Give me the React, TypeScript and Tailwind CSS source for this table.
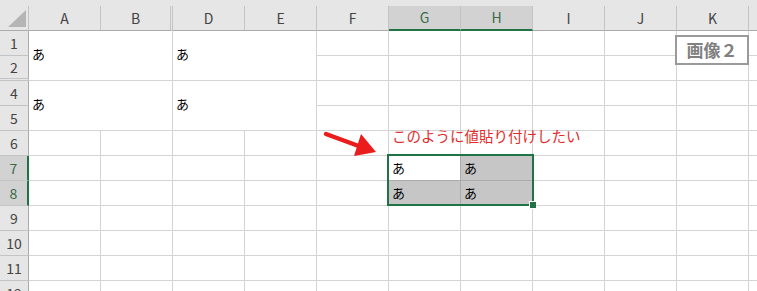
import React from 'react';

const FONT = "font-['Noto_Sans_CJK_JP','Noto_Sans',sans-serif]";

const cols = ['A', 'B', 'D', 'E', 'F', 'G', 'H', 'I', 'J', 'K'];

function ColHeader({ label }: { label: string }) {
  if (label === 'B') {
    return (
      <div className="w-[72px] shrink-0 flex items-center justify-center border-r-[3px] border-double border-r-[#c4c4c4] border-b border-b-[#ababab] text-[#444]">
        {label}
      </div>
    );
  }
  if (label === 'G' || label === 'H') {
    return (
      <div className="w-[72px] shrink-0 flex items-center justify-center bg-[#d2d2d2] border-r border-r-[#c4c4c4] border-b-2 border-b-[#217346] text-[#3a6a4a]">
        {label}
      </div>
    );
  }
  return (
    <div className="w-[72px] shrink-0 flex items-center justify-center border-r border-r-[#c4c4c4] border-b border-b-[#ababab] text-[#444]">
      {label}
    </div>
  );
}

function RowHeader({ n }: { n: number }) {
  if (n === 7 || n === 8) {
    return (
      <div className="flex items-center justify-center bg-[#d2d2d2] border-r-2 border-r-[#217346] border-b border-b-[#c4c4c4] text-[14px] text-[#3a6a4a]">
        {n}
      </div>
    );
  }
  if (n === 2) {
    return (
      <div className="flex items-center justify-center bg-[#e6e6e6] border-r border-r-[#ababab] border-b-[3px] border-double border-b-[#c4c4c4] text-[14px] text-[#444]">
        {n}
      </div>
    );
  }
  return (
    <div className="flex items-center justify-center bg-[#e6e6e6] border-r border-r-[#ababab] border-b border-b-[#c4c4c4] text-[14px] text-[#444]">
      {n}
    </div>
  );
}

function Cell({ children }: { children?: React.ReactNode }) {
  return <div className="border-r border-b border-[#d4d4d4] flex items-center pl-[3px] text-[13px] text-black">{children}</div>;
}

function Merged() {
  return (
    <div className="col-span-2 row-span-2 border-r border-b border-[#d4d4d4] flex items-center pl-[3px] pb-[3px] text-[13px] text-black">
      あ
    </div>
  );
}

function Filler() {
  return <div className="border-b border-[#d4d4d4]" />;
}

function PlainRest() {
  return (
    <>
      <Cell />
      <Cell />
      <Cell />
      <Cell />
      <Cell />
      <Cell />
      <Filler />
    </>
  );
}

export default function App() {
  return (
    <div className={`relative w-[757px] h-[291px] overflow-hidden bg-white ${FONT}`}>
      <div className="h-[6px] bg-[#e6e6e6]" />
      <div className="flex h-[25px] bg-[#e6e6e6] text-[14px]">
        <div className="w-[29px] shrink-0 relative border-r border-r-[#c4c4c4] border-b border-b-[#ababab]">
          <div className="absolute left-[8px] top-[4px] w-0 h-0 border-l-[18px] border-l-transparent border-b-[17px] border-b-[#b5b5b5]" />
        </div>
        {cols.map((c) => (
          <ColHeader key={c} label={c} />
        ))}
        <div className="flex-1 border-b border-b-[#ababab]" />
      </div>

      <div className="grid grid-cols-[29px_repeat(10,72px)_1fr] auto-rows-[25px]">
        {/* rows 1-2, merged A:B and D:E */}
        <RowHeader n={1} />
        <Merged />
        <Merged />
        <PlainRest />
        <RowHeader n={2} />
        <PlainRest />

        {/* rows 4-5 */}
        <RowHeader n={4} />
        <Merged />
        <Merged />
        <PlainRest />
        <RowHeader n={5} />
        <PlainRest />

        {[6, 7, 8, 9, 10, 11, 12].map((r) => (
          <React.Fragment key={r}>
            <RowHeader n={r} />
            <Cell />
            <Cell />
            <Cell />
            <Cell />
            <Cell />
            {r === 7 ? (
              <>
                <div className="border-r border-b border-r-[#ababab] border-b-[#ababab] bg-white flex items-center pl-[3px] text-[13px] text-black">あ</div>
                <div className="border-r border-b border-[#ababab] bg-[#c6c6c6] flex items-center pl-[3px] text-[13px] text-black">あ</div>
              </>
            ) : r === 8 ? (
              <>
                <div className="border-r border-b border-[#ababab] bg-[#c6c6c6] flex items-center pl-[3px] text-[13px] text-black">あ</div>
                <div className="border-r border-b border-[#ababab] bg-[#c6c6c6] flex items-center pl-[3px] text-[13px] text-black">あ</div>
              </>
            ) : (
              <>
                <Cell />
                <Cell />
              </>
            )}
            <Cell />
            <Cell />
            <Cell />
            <Filler />
          </React.Fragment>
        ))}
      </div>

      {/* selection G7:H8 */}
      <div className="absolute left-[387px] top-[154px] w-[147px] h-[52px] border-2 border-[#217346]" />
      <div className="absolute left-[530px] top-[202px] w-[6px] h-[6px] bg-[#217346] outline outline-1 outline-white" />

      {/* annotation */}
      <svg className="absolute left-[320px] top-[128px]" width="70" height="32" viewBox="320 128 70 32">
        <line x1="326" y1="134" x2="360" y2="146.5" stroke="#ea1c1c" strokeWidth="4.5" strokeLinecap="round" />
        <polygon points="376,152 354,156 361,134" fill="#ea1c1c" />
      </svg>
      <div className="absolute left-[392px] top-[129px] text-[14.5px] leading-none text-[#e22c2c] whitespace-nowrap">
        このように値貼り付けしたい
      </div>

      <div className="absolute left-[675px] top-[35px] w-[74px] h-[30px] border-2 border-[#9a9a9a] bg-white flex items-center justify-center text-[17px] font-bold text-[#808080]">
        画像２
      </div>
    </div>
  );
}
